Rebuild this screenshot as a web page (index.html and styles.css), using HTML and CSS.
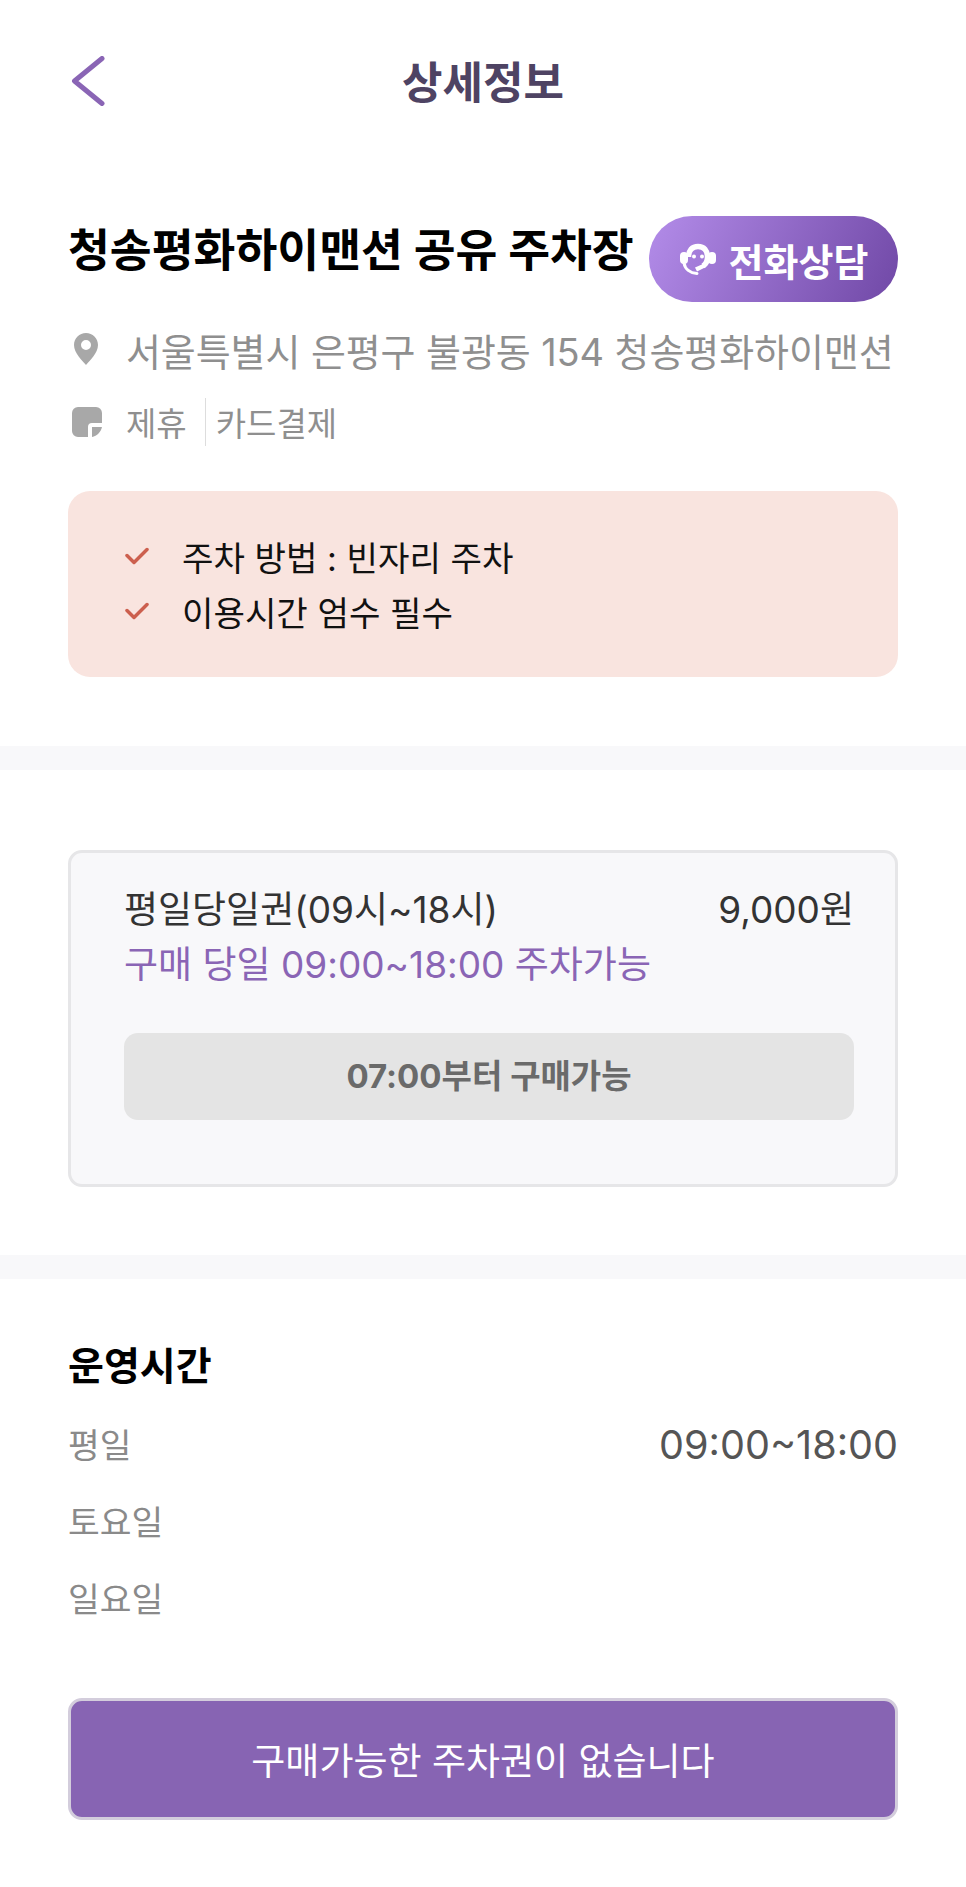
FILE: index.html
```html
<!DOCTYPE html>
<html lang="ko">
<head>
    <meta charset="UTF-8">
    <meta name="viewport" content="width=device-width, initial-scale=1.0">
    <title>상세정보</title>
    <link rel="stylesheet" href="styles.css">
</head>
<body>
    <!-- Header -->
    <header class="top-bar">
        <a class="back-link" href="#">
            <svg width="34" height="50" viewBox="0 0 34 50"><path d="M31 2.500 3.500 25 31 47.500" fill="none" stroke="#8a65b5" stroke-width="5" stroke-linecap="round" stroke-linejoin="round"/></svg>
        </a>
        <h1>상세정보</h1>
    </header>

    <!-- Parking lot info -->
    <section class="info-section">
        <div class="title-row">
            <h2>청송평화하이맨션 공유 주차장</h2>
            <a class="call-button" href="#">
                <svg width="38" height="32" viewBox="0 0 38 32">
                    <path d="M9.500 14C9.500 7.500 13 3.500 19 3.500S28.500 7.500 28.500 14C28.500 18 27 21 24 23" fill="none" stroke="#fff" stroke-width="5.500"/>
                    <rect x="1" y="9" width="8" height="12" rx="4" fill="#fff"/>
                    <rect x="29" y="9" width="8" height="12" rx="4" fill="#fff"/>
                    <path d="M5 20C6 26 11 30 18 30.500" fill="none" stroke="#fff" stroke-width="3" stroke-linecap="round"/>
                    <circle cx="15" cy="13.500" r="2" fill="#fff"/>
                    <circle cx="23" cy="13.500" r="2" fill="#fff"/>
                    <path d="M16 24.500 24 21 27 24 18 28.500Z" fill="#fff"/>
                </svg>
                <span>전화상담</span>
            </a>
        </div>
        <div class="address-row">
            <svg class="row-icon" width="24" height="32" viewBox="0 0 24 32"><path fill-rule="evenodd" d="M12 0C5.400 0 0 5.300 0 12c0 8 8.500 16 12 20 3.500-4 12-12 12-20C24 5.300 18.600 0 12 0Zm0 7a5 5 0 1 1 0 10 5 5 0 0 1 0-10Z" fill="#a8a8a8"/></svg>
            <span>서울특별시 은평구 불광동 154 청송평화하이맨션</span>
        </div>
        <div class="tag-row">
            <svg class="row-icon" width="30" height="30" viewBox="0 0 30 30"><path d="M6 0H24A6 6 0 0 1 30 6V16H20A4 4 0 0 0 16 20V30H6A6 6 0 0 1 0 24V6A6 6 0 0 1 6 0Z" fill="#a8a8a8"/><path d="M20 30V20H30C29 25 25 29 20 30Z" fill="#a8a8a8"/></svg>
            <span>제휴</span>
            <span class="tag-divider">카드결제</span>
        </div>
        <ul class="notice-box">
            <li>
                <svg width="24" height="18" viewBox="0 0 24 18"><path d="M2 8.500 9 15.500 22 2.500" fill="none" stroke="#cc5f4e" stroke-width="3.500" stroke-linecap="round" stroke-linejoin="round"/></svg>
                주차 방법 : 빈자리 주차
            </li>
            <li>
                <svg width="24" height="18" viewBox="0 0 24 18"><path d="M2 8.500 9 15.500 22 2.500" fill="none" stroke="#cc5f4e" stroke-width="3.500" stroke-linecap="round" stroke-linejoin="round"/></svg>
                이용시간 엄수 필수
            </li>
        </ul>
    </section>

    <div class="section-gap"></div>

    <!-- Ticket -->
    <section class="ticket-section">
        <div class="ticket-card">
            <div class="ticket-row">
                <span>평일당일권(09시~18시)</span>
                <span>9,000원</span>
            </div>
            <p class="ticket-note">구매 당일 09:00~18:00 주차가능</p>
            <div class="ticket-button">07:00부터 구매가능</div>
        </div>
    </section>

    <div class="section-gap"></div>

    <!-- Opening hours -->
    <section class="hours-section">
        <h3>운영시간</h3>
        <div class="hours-row">
            <span>평일</span>
            <span class="hours-time">09:00~18:00</span>
        </div>
        <div class="hours-row"><span>토요일</span></div>
        <div class="hours-row"><span>일요일</span></div>
        <button class="buy-button">구매가능한 주차권이 없습니다</button>
    </section>
</body>
</html>
```

FILE: styles.css
```css
* {
    margin: 0;
    padding: 0;
    box-sizing: border-box;
    font-family: Inter, "Noto Sans CJK KR", sans-serif;
}

body {
    background-color: white;
    color: black;
}

a {
    text-decoration: none;
}

/* Header */
.top-bar {
    position: relative;
    height: 160px;
    display: flex;
    justify-content: center;
    align-items: center;
}

.top-bar h1 {
    font-size: 44px;
    font-weight: 700;
    color: #4e4363;
}

.back-link {
    position: absolute;
    left: 71px;
    top: 56px;
}

/* Info section */
.info-section {
    padding: 56px 68px 69px;
}

.title-row {
    display: flex;
    justify-content: space-between;
    align-items: flex-start;
}

.title-row h2 {
    font-size: 45.500px;
    font-weight: 700;
    line-height: 70px;
    white-space: nowrap;
}

.call-button {
    width: 249px;
    height: 86px;
    border-radius: 43px;
    background: linear-gradient(115deg, #b38ce9, #7048a6);
    display: flex;
    justify-content: center;
    align-items: center;
    gap: 12px;
    color: white;
    font-size: 38px;
    font-weight: 700;
}

.address-row {
    display: flex;
    align-items: center;
    margin-top: 15px;
    height: 64px;
    font-size: 38px;
    letter-spacing: -0.1px;
    color: #8f8f8f;
    white-space: nowrap;
}

.row-icon {
    flex-shrink: 0;
    margin-left: 6px;
    margin-right: 28px;
}

.tag-row {
    display: flex;
    align-items: center;
    margin-top: 17px;
    height: 48px;
    font-size: 33px;
    color: #8f8f8f;
}

.tag-row .row-icon {
    margin-left: 4px;
    margin-right: 24px;
}

.tag-divider {
    margin-left: 18px;
    padding-left: 10px;
    border-left: 1px solid #dddddd;
}

.notice-box {
    list-style: none;
    margin-top: 45px;
    height: 186px;
    padding: 37px 57px;
    background-color: #f9e4df;
    border-radius: 22px;
}

.notice-box li {
    display: flex;
    align-items: center;
    gap: 33px;
    height: 55px;
    font-size: 34.200px;
    color: #111111;
}

/* Section gap */
.section-gap {
    height: 24px;
    background-color: #f8f8fa;
}

/* Ticket */
.ticket-section {
    padding: 80px 68px 68px;
}

.ticket-card {
    height: 337px;
    padding: 26px 41px 26px 53px;
    background-color: #f8f8fa;
    border: 3px solid #e6e6e8;
    border-radius: 14px;
}

.ticket-row {
    display: flex;
    justify-content: space-between;
    align-items: center;
    height: 56px;
    font-size: 37px;
    color: #333333;
}

.ticket-note {
    height: 56px;
    margin-top: 2px;
    line-height: 56px;
    font-size: 37px;
    color: #8a65b5;
}

.ticket-button {
    margin-top: 40px;
    height: 87px;
    line-height: 87px;
    text-align: center;
    background-color: #e4e4e4;
    border-radius: 14px;
    font-size: 33px;
    font-weight: 700;
    color: #6a6a6a;
}

/* Opening hours */
.hours-section {
    padding: 62px 68px 0;
}

.hours-section h3 {
    font-size: 39px;
    font-weight: 700;
    line-height: 50px;
    margin-bottom: 13px;
}

.hours-row {
    display: flex;
    justify-content: space-between;
    align-items: center;
    height: 77px;
    font-size: 34.500px;
    color: #8a8a8a;
}

.hours-time {
    padding-top: 4px;
    font-size: 39.600px;
    color: #555555;
}

.buy-button {
    display: block;
    width: 100%;
    height: 122px;
    margin-top: 63px;
    background-color: #8764b3;
    border: 3px solid #d3cddc;
    border-radius: 14px;
    color: white;
    font-size: 37px;
}
```
